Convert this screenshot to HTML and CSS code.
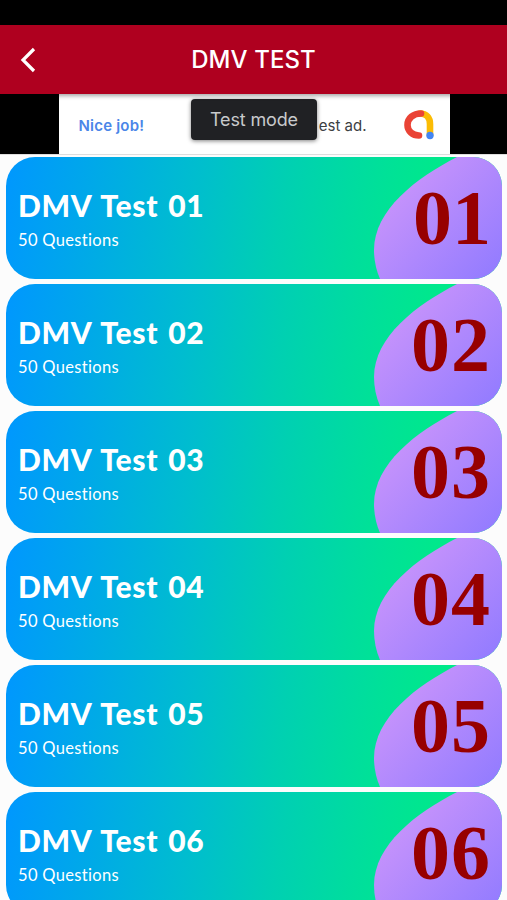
FILE: index.html
```html
<!DOCTYPE html>
<html lang="en">
<head>
<meta charset="utf-8">
<title>DMV TEST</title>
<link rel="stylesheet" href="styles.css">
</head>
<body>
<svg class="defs" width="0" height="0" aria-hidden="true">
  <defs>
    <linearGradient id="violet" gradientUnits="userSpaceOnUse" x1="15" y1="25" x2="120" y2="125">
      <stop offset="0" stop-color="#cb95fb"/><stop offset="1" stop-color="#927bff"/>
    </linearGradient>
    <symbol id="wave" viewBox="0 0 130 122">
      <path fill="url(#violet)" d="M85 0C44 21 2 53 2 93Q2 108 8 122H130V0Z"/>
    </symbol>
  </defs>
</svg>
<header class="bar">
  <svg class="back" width="16" height="26" viewBox="0 0 16 26"><path d="M14 2 3 13 14 24"/></svg>
  <h1 class="heading">DMV TEST</h1>
</header>
<div class="banner">
  <div class="ad">
    <span class="praise">Nice job!</span>
    <span class="notice">est ad.</span>
    <svg class="logo" width="32" height="32" viewBox="0 0 32 32">
      <path d="M17 4.500C23.500 4.500 27 9 27 15V26" stroke="#fbbc04"/>
      <path d="M18 4.500C10.500 4.500 4.500 9 4.500 16C4.500 22 9.500 26.500 16 26.500" stroke="#ea4335"/>
      <circle cx="27" cy="26.500" r="3.700" fill="#4285f4" stroke="none"/>
    </svg>
    <span class="toast">Test mode</span>
  </div>
</div>
<main class="list">
  <section class="card"><div class="info"><h2 class="title">DMV Test 01</h2><p class="count">50 Questions</p></div><div class="side"><svg class="wave"><use href="#wave"/></svg><span class="number first">01</span></div></section>
  <section class="card"><div class="info"><h2 class="title">DMV Test 02</h2><p class="count">50 Questions</p></div><div class="side"><svg class="wave"><use href="#wave"/></svg><span class="number">02</span></div></section>
  <section class="card"><div class="info"><h2 class="title">DMV Test 03</h2><p class="count">50 Questions</p></div><div class="side"><svg class="wave"><use href="#wave"/></svg><span class="number">03</span></div></section>
  <section class="card"><div class="info"><h2 class="title">DMV Test 04</h2><p class="count">50 Questions</p></div><div class="side"><svg class="wave"><use href="#wave"/></svg><span class="number">04</span></div></section>
  <section class="card"><div class="info"><h2 class="title">DMV Test 05</h2><p class="count">50 Questions</p></div><div class="side"><svg class="wave"><use href="#wave"/></svg><span class="number">05</span></div></section>
  <section class="card"><div class="info"><h2 class="title">DMV Test 06</h2><p class="count">50 Questions</p></div><div class="side"><svg class="wave"><use href="#wave"/></svg><span class="number">06</span></div></section>
</main>
</body>
</html>
```

FILE: styles.css
```css
* { box-sizing: border-box; margin: 0; }
body { height: 900px; overflow: hidden; padding-top: 25px; background: linear-gradient(#000 25px, #fcfcfc 25px); font-family: Inter, sans-serif; }
.defs { position: absolute; }
.bar { position: relative; z-index: 1; height: 69px; display: grid; grid-template-columns: 56px 1fr 56px; align-items: center; background: #af001f; box-shadow: 0 2px 4px rgba(0, 0, 0, .35); }
.back { margin-left: 20px; fill: none; stroke: #fff; stroke-width: 3.2; }
.heading { color: #fff; font-size: 24px; line-height: 28px; font-weight: 500; letter-spacing: .1px; text-align: center; white-space: nowrap; }
.banner { height: 61px; background: #000; border-bottom: 1px solid #ddd; display: flex; justify-content: center; }
.ad { position: relative; left: .5px; width: 391px; height: 60px; background: #fff; display: flex; align-items: center; padding: 2px 15px 0 20px; }
.praise { color: #4a86e8; font-size: 15px; font-weight: 600; letter-spacing: .2px; }
.notice { margin-left: auto; color: #3c4043; font-size: 15px; }
.logo { margin-left: 36px; fill: none; stroke-width: 6.6; stroke-linecap: round; }
.toast { position: absolute; left: 132.500px; top: 5px; width: 126px; height: 41px; border-radius: 4px; background: #202124; color: #c8cacc; font-size: 18px; line-height: 41px; text-align: center; letter-spacing: -.15px; box-shadow: 0 1px 4px rgba(0, 0, 0, .5); }
.list { display: grid; gap: 5px; padding: 2px 5px 0 6px; }
.card { height: 122px; display: flex; justify-content: space-between; overflow: hidden; border-radius: 29px; background: linear-gradient(99deg, #0098fd 1%, #00a6ec 15%, #00bdcf 37%, #00d0b2 55%, #00e198 74%, #00ea89 86%); }
.info { padding: 30px 0 0 12px; color: #fff; white-space: nowrap; }
.title { font: 900 30px/36px Lato, sans-serif; letter-spacing: .7px; word-spacing: 2px; }
.count { margin-top: 6px; font: 400 16.500px/22px Lato, sans-serif; letter-spacing: .33px; font-variant-ligatures: none; }
.side { width: 130px; display: grid; }
.wave, .number { grid-area: 1 / 1; }
.wave { width: 130px; height: 122px; }
.number { z-index: 1; justify-self: end; padding: 16px 11px 0 0; color: #970000; font: 700 78px/90px "Liberation Serif", serif; letter-spacing: 1px; }
.first { padding-right: 11px; letter-spacing: 0; }
```
